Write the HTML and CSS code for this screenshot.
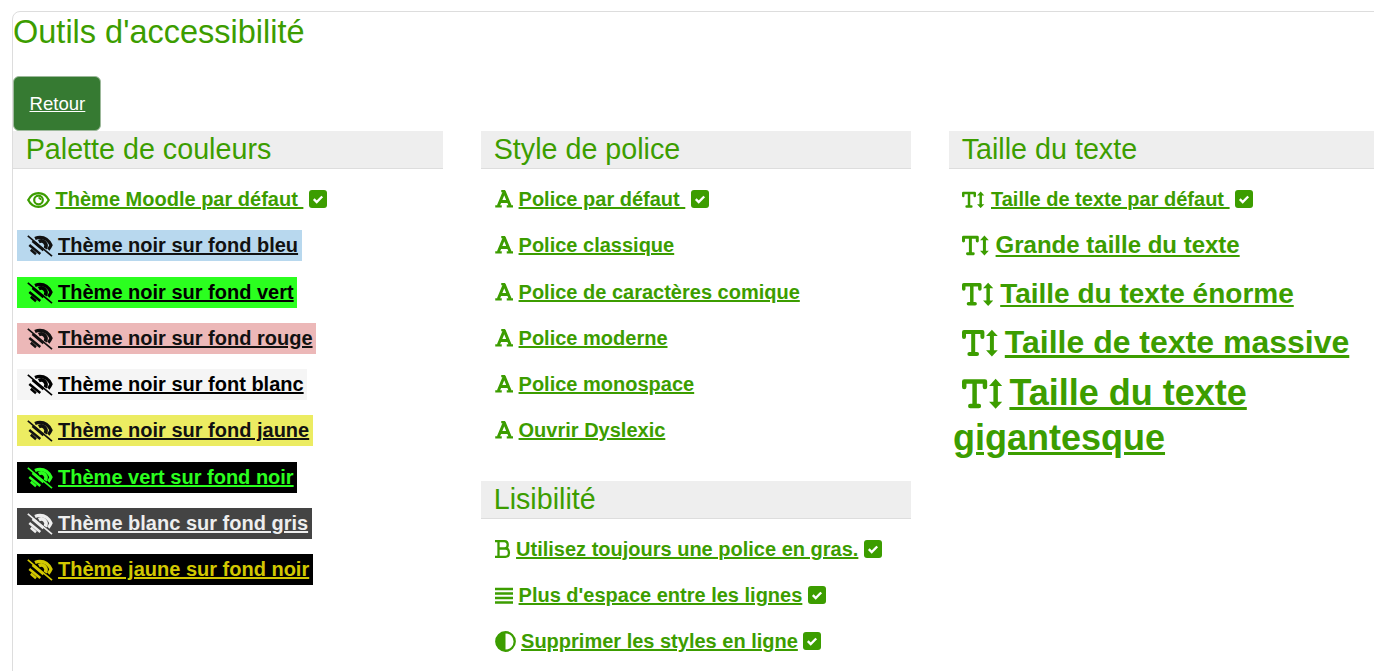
FILE: index.html
```html
<!DOCTYPE html>
<html lang="fr">
<head>
<meta charset="utf-8">
<title>Outils d'accessibilité</title>
<link rel="stylesheet" href="styles.css">
</head>
<body>
<svg class="defs" width="0" height="0" aria-hidden="true">
  <defs>
    <symbol id="i-check" viewBox="0 0 18 18"><rect x="0" y="0" width="18" height="18" rx="3" fill="#3c9d00"/><path d="M4.800 9.200l2.900 2.800 5.500-5.500" fill="none" stroke="#fff" stroke-width="2.400"/></symbol>
    <symbol id="i-eye" viewBox="0 0 24 18"><path d="M1.300 9C3.800 4.200 7.600 1.800 12 1.800s8.200 2.400 10.700 7.200C20.200 13.800 16.400 16.200 12 16.200S3.800 13.800 1.300 9z" fill="none" stroke="currentColor" stroke-width="2.300"/><circle cx="12" cy="9" r="4.500" fill="none" stroke="currentColor" stroke-width="2.300"/><path d="M12 6.800a2.200 2.200 0 0 1 2.200 2.200" fill="none" stroke="currentColor" stroke-width="1.700"/></symbol>
    <symbol id="i-slash" viewBox="0 0 26 22"><path d="M8 3.500C9.700 2.700 11.300 2.300 13 2.300c4.700 0 8.800 3 11 7.900-.7 1.700-1.600 3.200-2.700 4.400" fill="none" stroke="currentColor" stroke-width="3.200"/><path d="M11.800 6.600a4.800 4.800 0 0 1 6.400 6.800" fill="none" stroke="currentColor" stroke-width="3.600"/><path d="M5.500 6L16.500 15.200M2.300 10L13.300 19M3.800 14.800L9 19.200" fill="none" stroke="currentColor" stroke-width="2.500"/><path d="M.8.800l24.200 20.400" fill="none" stroke="currentColor" stroke-width="1.700"/></symbol>
    <symbol id="i-a" viewBox="0 0 18 18"><path d="M9 1.500L3 16M9 1.500L15 16M5 11.600h8" fill="none" stroke="currentColor" stroke-width="3"/><path d="M6 1.200h4M0 16.400h6.500M11.500 16.400h6.500" fill="none" stroke="currentColor" stroke-width="2.200"/></symbol>
    <symbol id="i-b" viewBox="0 0 16 18"><path d="M0 1.200h9.500c4.300 0 4.300 7.300 0 7.300H3.500M3.500 8.500h7c4.600 0 4.600 8.300 0 8.300H0M3.500 1.200v15.600" fill="none" stroke="currentColor" stroke-width="2.300"/></symbol>
    <symbol id="i-lines" viewBox="0 0 18 18"><path d="M0 2h18M0 6.500h18M0 11h18M0 15.500h18" fill="none" stroke="currentColor" stroke-width="2.400"/></symbol>
    <symbol id="i-half" viewBox="0 0 20 20"><circle cx="10" cy="10" r="8.800" fill="none" stroke="currentColor" stroke-width="2.200"/><path d="M10 1a9 9 0 0 0 0 18z" fill="currentColor"/></symbol>
    <symbol id="i-t" viewBox="0 0 24 18"><path d="M1.300 5V1.800h12V5M7.300 1.800v14.300M4.800 16.100h5" fill="none" stroke="currentColor" stroke-width="2.600" stroke-linecap="round" stroke-linejoin="round"/><path d="M19.500 3v12" stroke="currentColor" stroke-width="2.600"/><path d="M19.500.3l3.800 4.100h-7.600zM19.500 17.700l3.800-4.100h-7.600z" fill="currentColor"/></symbol>
  </defs>
</svg>
<main class="card">
  <h1 class="title">Outils d'accessibilité</h1>
  <a class="back" href="#">Retour</a>
  <div class="columns">
    <section class="col">
      <h2 class="head">Palette de couleurs</h2>
      <ul class="list">
        <li class="item"><svg class="ico eye"><use href="#i-eye"/></svg> <a href="#">Thème Moodle par défaut&nbsp;</a> <svg class="tick"><use href="#i-check"/></svg></li>
        <li class="item"><span class="swatch bleu"><svg class="ico slash"><use href="#i-slash"/></svg> <a href="#">Thème noir sur fond bleu</a></span></li>
        <li class="item"><span class="swatch vert"><svg class="ico slash"><use href="#i-slash"/></svg> <a href="#">Thème noir sur fond vert</a></span></li>
        <li class="item"><span class="swatch rouge"><svg class="ico slash"><use href="#i-slash"/></svg> <a href="#">Thème noir sur fond rouge</a></span></li>
        <li class="item"><span class="swatch blanc"><svg class="ico slash"><use href="#i-slash"/></svg> <a href="#">Thème noir sur font blanc</a></span></li>
        <li class="item"><span class="swatch jaune"><svg class="ico slash"><use href="#i-slash"/></svg> <a href="#">Thème noir sur fond jaune</a></span></li>
        <li class="item"><span class="swatch noirvert"><svg class="ico slash"><use href="#i-slash"/></svg> <a href="#">Thème vert sur fond noir</a></span></li>
        <li class="item"><span class="swatch gris"><svg class="ico slash"><use href="#i-slash"/></svg> <a href="#">Thème blanc sur fond gris</a></span></li>
        <li class="item"><span class="swatch noirjaune"><svg class="ico slash"><use href="#i-slash"/></svg> <a href="#">Thème jaune sur fond noir</a></span></li>
      </ul>
    </section>
    <section class="col">
      <h2 class="head">Style de police</h2>
      <ul class="list">
        <li class="item"><svg class="ico glyph"><use href="#i-a"/></svg> <a href="#">Police par défaut&nbsp;</a> <svg class="tick"><use href="#i-check"/></svg></li>
        <li class="item"><svg class="ico glyph"><use href="#i-a"/></svg> <a href="#">Police classique</a></li>
        <li class="item"><svg class="ico glyph"><use href="#i-a"/></svg> <a href="#">Police de caractères comique</a></li>
        <li class="item"><svg class="ico glyph"><use href="#i-a"/></svg> <a href="#">Police moderne</a></li>
        <li class="item"><svg class="ico glyph"><use href="#i-a"/></svg> <a href="#">Police monospace</a></li>
        <li class="item"><svg class="ico glyph"><use href="#i-a"/></svg> <a href="#">Ouvrir Dyslexic</a></li>
      </ul>
      <h2 class="head second">Lisibilité</h2>
      <ul class="list">
        <li class="item"><svg class="ico bold"><use href="#i-b"/></svg> <a href="#">Utilisez toujours une police en gras.</a> <svg class="tick"><use href="#i-check"/></svg></li>
        <li class="item"><svg class="ico lines"><use href="#i-lines"/></svg> <a href="#">Plus d'espace entre les lignes</a> <svg class="tick"><use href="#i-check"/></svg></li>
        <li class="item"><svg class="ico half"><use href="#i-half"/></svg> <a href="#">Supprimer les styles en ligne</a> <svg class="tick"><use href="#i-check"/></svg></li>
      </ul>
    </section>
    <section class="col">
      <h2 class="head">Taille du texte</h2>
      <ul class="list">
        <li class="item size-a"><svg class="ico tt"><use href="#i-t"/></svg><a href="#">Taille de texte par défaut&nbsp;</a> <svg class="tick"><use href="#i-check"/></svg></li>
        <li class="item size-b"><svg class="ico tt"><use href="#i-t"/></svg><a href="#">Grande taille du texte</a></li>
        <li class="item size-c"><svg class="ico tt"><use href="#i-t"/></svg><a href="#">Taille du texte énorme</a></li>
        <li class="item size-d"><svg class="ico tt"><use href="#i-t"/></svg><a href="#">Taille de texte massive</a></li>
        <li class="item size-e"><svg class="ico tt"><use href="#i-t"/></svg><a href="#">Taille du texte gigantesque</a></li>
      </ul>
    </section>
  </div>
</main>
</body>
</html>
```
FILE: styles.css
```css
html, body {
  margin: 0;
  height: 100%;
  overflow: hidden;
  background: #fff;
}
body {
  font-family: "Liberation Sans", Arial, sans-serif;
  color: #3c9d00;
}
.defs { position: absolute; }
.card {
  margin: 11px 0 0 12px;
  width: 1500px;
  border: 1px solid #ddd;
  border-radius: 8px;
  height: 800px;
  box-sizing: border-box;
}
.title {
  margin: 0;
  font-size: 32.5px;
  font-weight: 400;
  line-height: 40px;
}
.back {
  display: inline-block;
  margin-top: 24px;
  padding: 15.5px 15px 16.5px 15.5px;
  font-size: 18.6px;
  line-height: 21px;
  color: #fff;
  background: #367a32;
  border: 1px solid #9db99b;
  border-radius: 6px;
}
.columns {
  display: grid;
  grid-template-columns: repeat(3, 430px);
  column-gap: 38px;
}
.head {
  margin: 0;
  padding: 0 12.7px;
  height: 37px;
  line-height: 36px;
  font-size: 28.7px;
  font-weight: 400;
  background: #eee;
  border-bottom: 1px solid #ddd;
}
.second { margin-top: 34.2px; }
.list {
  list-style: none;
  margin: 0;
  padding: 15.1px 0 0;
}
.item {
  padding: 0 4px;
  min-height: 31px;
  margin-bottom: 15.25px;
  font-size: 20px;
  font-weight: 700;
  line-height: 31px;
}
.item a { color: inherit; text-decoration: underline; }
.swatch {
  display: inline-block;
  padding: 0 3.7px 0 9.5px;
  height: 31px;
}
.bleu { background: #b8d8ee; color: #111; }
.vert { background: #2bff1f; color: #000; }
.rouge { background: #ecb8b8; color: #111; }
.blanc { background: #f5f5f5; color: #000; }
.jaune { background: #ecec62; color: #111; }
.noirvert { background: #000; color: #2bff1f; }
.gris { background: #444; color: #eee; }
.noirjaune { background: #000; color: #d2c800; }
.ico { vertical-align: -3px; color: inherit; }
.eye { width: 23px; height: 18px; margin-left: 10px; }
.slash { width: 26px; height: 22px; vertical-align: -5px; }
.glyph { width: 18.5px; height: 18px; margin-left: 9.5px; vertical-align: -2px; }
.lines { width: 18px; height: 18px; margin-left: 10px; }
.bold { width: 16px; height: 18px; margin-left: 9.5px; vertical-align: -2px; }
.half { width: 21px; height: 21px; margin-left: 9.5px; vertical-align: -4px; }
.tick { width: 18px; height: 18px; vertical-align: -2px; }
.tt { width: 1.15em; height: 0.88em; margin: 0 6px 0 9px; vertical-align: -0.12em; }
.size-a { margin-bottom: 14.2px; }
.size-b { font-size: 24px; line-height: 31px; margin-bottom: 17px; }
.size-c { font-size: 28px; line-height: 34px; margin-bottom: 13px; }
.size-d { font-size: 32px; line-height: 36px; margin-bottom: 10px; }
.size-e { font-size: 36px; line-height: 45px; }
```
